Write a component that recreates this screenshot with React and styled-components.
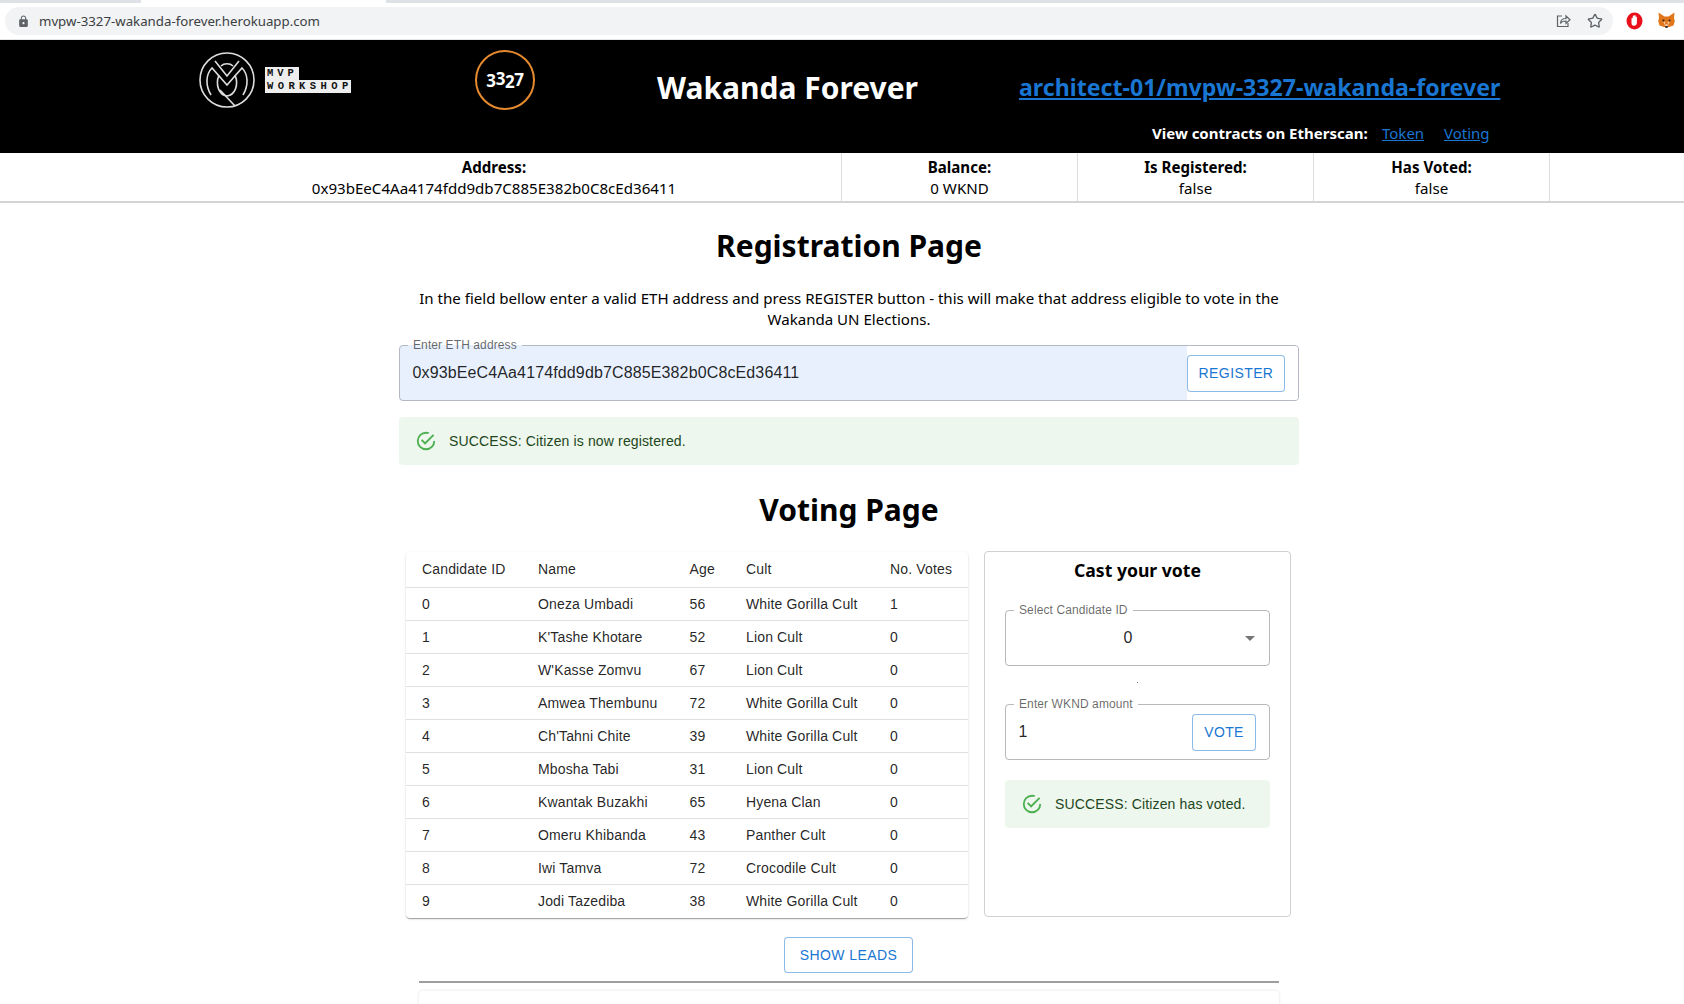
import React from "react";
import styled, { createGlobalStyle } from "styled-components";
import { MdLock } from "react-icons/md";
import { LuStar } from "react-icons/lu";

const GlobalStyle = createGlobalStyle`
  html, body {
    margin: 0;
    padding: 0;
    width: 1684px;
    height: 1004px;
    overflow: hidden;
    background: #fff;
  }
  * { box-sizing: border-box; }
`;

const Page = styled.div`
  width: 1684px;
  height: 1004px;
  overflow: hidden;
  font-family: "Noto Sans", "Open Sans", sans-serif;
  color: #000;
`;

/* browser chrome */
const TabStrip = styled.div`
  height: 3px;
  background: linear-gradient(to right, #dee1e6 141px, #fff 141px, #fff 386px, #dee1e6 386px);
`;

const Toolbar = styled.div`
  height: 37px;
  display: flex;
  align-items: flex-start;
  padding: 4px 0 0 5px;
  background: #fff;
  border-bottom: 1px solid #e4e5e7;
`;

const AddressBar = styled.div`
  width: 1608px;
  height: 28px;
  border-radius: 14px;
  background: #f1f3f4;
  display: flex;
  align-items: center;
  padding: 0 10px 0 12px;
`;

const UrlText = styled.span`
  margin-left: 9px;
  font-size: 13.25px;
  color: #3c4043;
  flex: 1;
`;

const ChromeIcon = styled.span`
  display: flex;
  color: #5f6368;
  margin-left: ${(p) => p.$gap || 0}px;
`;

const ExtIcon = styled.span`
  display: flex;
  margin: 5px 0 0 ${(p) => p.$gap}px;
`;

/* black header */
const Header = styled.header`
  height: 113px;
  background: #000;
  color: #fff;
  display: flex;
  padding-left: 199px;
`;

const LogoMark = styled.svg`
  width: 56px;
  height: 56px;
  margin-top: 12px;
`;

const Badge = styled.div`
  margin: 27px 0 0 10px;
  display: flex;
  flex-direction: column;
  align-items: flex-start;
  font-family: "Liberation Mono", monospace;
  font-weight: 700;
  font-size: 10.5px;
  line-height: 13px;
  color: #111;
`;

const BadgeLine = styled.span`
  background: #eee;
  height: 13px;
  letter-spacing: ${(p) => p.$spacing}px;
  padding-left: 2px;
  width: ${(p) => p.$width}px;
`;

const Circle = styled.div`
  width: 60px;
  height: 60px;
  margin: 10px 0 0 124px;
  border: 2px solid #e68a2e;
  border-radius: 50%;
  display: flex;
  align-items: center;
  justify-content: center;
  font-weight: 700;
  font-size: 17px;
  letter-spacing: -0.4px;
`;

const Digit = styled.span`
  position: relative;
  top: ${(p) => p.$shift}px;
`;

const Title = styled.h1`
  width: 261px;
  margin: 28px 0 0 122px;
  font-size: 30px;
  line-height: 40px;
  font-weight: 700;
  white-space: nowrap;
  text-align: center;
`;

const LinksColumn = styled.div`
  margin-left: 101px;
  display: flex;
  flex-direction: column;
`;

const RepoLink = styled.a`
  margin-top: 29px;
  font-size: 23.15px;
  line-height: 36px;
  font-weight: 700;
  color: #1976d2;
  text-decoration: underline;
  white-space: nowrap;
`;

const ContractsRow = styled.div`
  margin-top: 17px;
  padding-left: 133px;
  display: flex;
  font-size: 15px;
  line-height: 22px;
  white-space: nowrap;
`;

const ContractsLabel = styled.b`
  width: 230px;
`;

const ContractLink = styled.a`
  width: ${(p) => p.$width}px;
  color: #1976d2;
  text-decoration: underline;
`;

/* account info row */
const InfoRow = styled.div`
  display: grid;
  grid-template-columns: 695px 236px 236px 236px;
  height: 50px;
  padding-left: 147px;
  border-bottom: 2px solid #d4d4d4;
`;

const InfoCell = styled.div`
  border-right: 1px solid #ddd;
  text-align: center;
  font-size: 15.1px;
  line-height: 21px;
  padding-top: 4px;
`;

const InfoLabel = styled.div`
  font-weight: 700;
`;

/* main column */
const Main = styled.main`
  width: 900px;
  margin-left: 399px;
`;

const PageHeading = styled.h2`
  margin: ${(p) => p.$top}px 0 0;
  font-size: 30px;
  line-height: 40px;
  font-weight: 700;
  text-align: center;
`;

const Intro = styled.p`
  margin: 22px 20px 0;
  font-size: 15.07px;
  line-height: 20.5px;
  text-align: center;
`;

const Field = styled.fieldset`
  margin: ${(p) => p.$top}px 0 0;
  padding: 0;
  min-width: 0;
  height: 62px;
  border: 1px solid ${(p) => (p.$filled ? "#b4b8c4" : "rgba(0, 0, 0, 0.28)")};
  border-radius: 4px;
  background: ${(p) => (p.$filled ? "#e8f0fe" : "transparent")};
  font-family: "Liberation Sans", Arial, sans-serif;
`;

const Legend = styled.legend`
  margin-left: 8px;
  padding: 0 5px;
  font-size: 12px;
  line-height: 12px;
  letter-spacing: 0.1px;
  color: rgba(0, 0, 0, 0.6);
`;

const FieldRow = styled.div`
  display: flex;
  align-items: center;
  height: 54px;
  margin-top: -5px;
  padding-right: ${(p) => p.$end}px;
`;

const FieldValue = styled.div`
  flex: 1;
  padding-left: 12.5px;
  font-size: 16px;
  letter-spacing: 0.13px;
  color: rgba(0, 0, 0, 0.87);
`;

const OutlineButton = styled.button`
  height: ${(p) => p.$height || 37}px;
  width: ${(p) => p.$width}px;
  padding: 0;
  display: block;
  background: #fff;
  border: 1px solid rgba(25, 118, 210, 0.5);
  border-radius: 4px;
  color: #1976d2;
  font-family: "Liberation Sans", Arial, sans-serif;
  font-size: 14px;
  font-weight: 400;
  letter-spacing: 0.4px;
`;

const FilledEnd = styled.div`
  background: #fff;
  height: 54px;
  display: flex;
  align-items: center;
  padding: 0 13px 0 0;
  border-radius: 0 3px 3px 0;
`;

const Alert = styled.div`
  height: 48px;
  margin-top: ${(p) => p.$top}px;
  padding-left: 16px;
  display: flex;
  align-items: center;
  gap: 12px;
  border-radius: 4px;
  background: #edf7ed;
  color: #1e4620;
  font-family: "Liberation Sans", Arial, sans-serif;
  font-size: 14px;
  letter-spacing: 0.14px;
`;

/* voting area */
const VotingRow = styled.div`
  display: flex;
  align-items: flex-start;
  gap: 16px;
  margin-top: 22px;
  padding-left: 7px;
`;

const TableCard = styled.div`
  width: 562px;
  height: 366px;
  border-radius: 4px;
  background: #fff;
  box-shadow: 0 2px 1px -1px rgba(0, 0, 0, 0.2), 0 1px 1px rgba(0, 0, 0, 0.14), 0 1px 3px rgba(0, 0, 0, 0.12);
`;

const Table = styled.table`
  width: 562px;
  table-layout: fixed;
  border-collapse: collapse;
  font-family: "Liberation Sans", Arial, sans-serif;
  font-size: 14px;
  letter-spacing: 0.15px;
  color: rgba(0, 0, 0, 0.87);
`;

const HeadCell = styled.th`
  height: 35px;
  padding: 0 0 0 16px;
  width: ${(p) => p.$width}px;
  font-weight: 400;
  text-align: left;
  border-bottom: 1px solid #e0e0e0;
`;

const Cell = styled.td`
  height: 33px;
  padding: 0 0 0 16px;
  border-bottom: 1px solid #e0e0e0;
  white-space: nowrap;
`;

const LastRow = styled.tr`
  &:last-child td { border-bottom: none; }
`;

const VoteCard = styled.section`
  width: 307px;
  height: 366px;
  margin-top: -1px;
  padding: 6px 20px 0;
  border: 1px solid #d0d0d0;
  border-radius: 4px;
`;

const VoteTitle = styled.h3`
  margin: 0 0 22px;
  font-size: 17.6px;
  line-height: 24px;
  font-weight: 700;
  text-align: center;
`;

const SelectValue = styled.div`
  flex: 1;
  padding-left: 12px;
  text-align: center;
  font-size: 16px;
  color: rgba(0, 0, 0, 0.87);
`;

const SelectRow = styled.div`
  display: flex;
  align-items: center;
  height: 54px;
  margin-top: -5px;
  padding-right: 7px;
  color: rgba(0, 0, 0, 0.54);
`;

const Speck = styled.div`
  height: 32px;
  display: flex;
  align-items: center;
  justify-content: center;
  &::after {
    content: "";
    width: 1px;
    height: 1px;
    background: #777;
  }
`;

const LeadsWrap = styled.div`
  margin-top: 19px;
  padding-left: 385px;
`;

const Divider = styled.hr`
  width: 860px;
  height: 2px;
  margin: 8px 0 0 20px;
  border: none;
  background: #9e9e9e;
`;

const NextCard = styled.div`
  width: 860px;
  height: 40px;
  margin: 8px 0 0 20px;
  border-radius: 4px;
  box-shadow: 0 0 3px rgba(0, 0, 0, 0.14);
`;

const candidates = [
  ["Oneza Umbadi", 56, "White Gorilla Cult", 1],
  ["K'Tashe Khotare", 52, "Lion Cult", 0],
  ["W'Kasse Zomvu", 67, "Lion Cult", 0],
  ["Amwea Thembunu", 72, "White Gorilla Cult", 0],
  ["Ch'Tahni Chite", 39, "White Gorilla Cult", 0],
  ["Mbosha Tabi", 31, "Lion Cult", 0],
  ["Kwantak Buzakhi", 65, "Hyena Clan", 0],
  ["Omeru Khibanda", 43, "Panther Cult", 0],
  ["Iwi Tamva", 72, "Crocodile Cult", 0],
  ["Jodi Tazediba", 38, "White Gorilla Cult", 0],
];

const ADDRESS = "0x93bEeC4Aa4174fdd9db7C885E382b0C8cEd36411";

const SuccessIcon = () => (
  <svg width="22" height="22" viewBox="0 0 24 24" fill="#4caf50">
    <path d="M20,12A8,8 0 0,1 12,20A8,8 0 0,1 4,12A8,8 0 0,1 12,4C12.76,4 13.5,4.11 14.2,4.31L15.77,2.74C14.61,2.26 13.34,2 12,2A10,10 0 0,0 2,12A10,10 0 0,0 12,22A10,10 0 0,0 22,12M7.91,10.08L6.5,11.5L11,16L21,6L19.59,4.58L11,13.17L7.91,10.08Z" />
  </svg>
);

const ShareIcon = () => (
  <svg width="16" height="16" viewBox="0 0 16 16" fill="none" stroke="#5f6368" strokeWidth="1.2">
    <path d="M7 3H2.5v10.500h10.500V10" />
    <path d="M5.500 10.500c0-3.500 2.500-5 5.500-5V3l4 3.800-4 3.700V8c-2.500 0-4.500.6-5.500 2.500z" />
  </svg>
);

const OperaIcon = () => (
  <svg width="17" height="18" viewBox="0 0 17 18">
    <ellipse cx="8.500" cy="9" rx="8" ry="8.500" fill="#e8101a" />
    <path d="M5.500 6.500c0-1 1.200-1 1.300 0V4.200c0-1 1.400-1 1.400 0v-.5c0-1 1.400-1 1.400 0V5c.1-.9 1.300-.8 1.300.2v5.300c0 2-1.200 3.300-2.900 3.300-1.800 0-2.500-1.300-2.500-3z" fill="#fff" />
  </svg>
);

const FoxIcon = () => (
  <svg width="17" height="17" viewBox="0 0 17 17">
    <polygon points="0.500,0.500 6.500,4.500 10.500,4.500 16.500,0.500 16,6 16.800,9 15.500,13.500 11,15 6,15 1.500,13.500 0.200,9 1,6" fill="#e2761b" />
    <polygon points="5,9 7.500,10 6.500,13 8.500,12 10.500,13 9.500,10 12,9 10,14 7,14" fill="#f6c9a0" />
    <polygon points="7,14 10,14 9.500,16 7.500,16" fill="#3a2a20" />
    <circle cx="5.500" cy="8.500" r="1" fill="#2b1a10" />
    <circle cx="11.500" cy="8.500" r="1" fill="#2b1a10" />
  </svg>
);

const App = () => {
  return (
    <Page>
      <GlobalStyle />
      <TabStrip />
      <Toolbar>
        <AddressBar>
          <ChromeIcon>
            <MdLock size={13} />
          </ChromeIcon>
          <UrlText>mvpw-3327-wakanda-forever.herokuapp.com</UrlText>
          <ChromeIcon>
            <ShareIcon />
          </ChromeIcon>
          <ChromeIcon $gap={16}>
            <LuStar size={16} />
          </ChromeIcon>
        </AddressBar>
        <ExtIcon $gap={13}>
          <OperaIcon />
        </ExtIcon>
        <ExtIcon $gap={15}>
          <FoxIcon />
        </ExtIcon>
      </Toolbar>

      <Header>
        <LogoMark viewBox="0 0 56 56" fill="none" stroke="#ddd" strokeWidth="1.6">
          <circle cx="28" cy="28" r="27" />
          <path d="M12 43C6 33 7 22 13 16L28 33L43 16C49 22 50 33 44 43" />
          <path d="M16 9L28 24L40 9" />
          <path d="M20 23C16 33 20 43 28 44C36 43 40 33 36 23" />
          <path d="M22 14C25 11 31 11 34 14" />
          <path d="M21 38L36 54" />
        </LogoMark>
        <Badge>
          <BadgeLine $spacing={4} $width={34}>MVP</BadgeLine>
          <BadgeLine $spacing={4.4} $width={86}>WORKSHOP</BadgeLine>
        </Badge>
        <Circle>
          <Digit $shift={0}>3</Digit>
          <Digit $shift={-2}>3</Digit>
          <Digit $shift={1}>2</Digit>
          <Digit $shift={-1}>7</Digit>
        </Circle>
        <Title>Wakanda Forever</Title>
        <LinksColumn>
          <RepoLink href="#">architect-01/mvpw-3327-wakanda-forever</RepoLink>
          <ContractsRow>
            <ContractsLabel>View contracts on Etherscan:</ContractsLabel>
            <ContractLink $width={62} href="#">Token</ContractLink>
            <ContractLink $width={47} href="#">Voting</ContractLink>
          </ContractsRow>
        </LinksColumn>
      </Header>

      <InfoRow>
        <InfoCell>
          <InfoLabel>Address:</InfoLabel>
          {ADDRESS}
        </InfoCell>
        <InfoCell>
          <InfoLabel>Balance:</InfoLabel>0 WKND
        </InfoCell>
        <InfoCell>
          <InfoLabel>Is Registered:</InfoLabel>false
        </InfoCell>
        <InfoCell>
          <InfoLabel>Has Voted:</InfoLabel>false
        </InfoCell>
      </InfoRow>

      <Main>
        <PageHeading $top={23}>Registration Page</PageHeading>
        <Intro>
          In the field bellow enter a valid ETH address and press REGISTER button - this will make that address
          eligible to vote in the Wakanda UN Elections.
        </Intro>
        <Field $top={10} $filled>
          <Legend>Enter ETH address</Legend>
          <FieldRow $end={0}>
            <FieldValue>{ADDRESS}</FieldValue>
            <FilledEnd>
              <OutlineButton $width={98}>REGISTER</OutlineButton>
            </FilledEnd>
          </FieldRow>
        </Field>
        <Alert $top={16}>
          <SuccessIcon />
          SUCCESS: Citizen is now registered.
        </Alert>

        <PageHeading $top={25}>Voting Page</PageHeading>
        <VotingRow>
          <TableCard>
            <Table>
              <thead>
                <tr>
                  <HeadCell $width={116}>Candidate ID</HeadCell>
                  <HeadCell $width={151.5}>Name</HeadCell>
                  <HeadCell $width={56.5}>Age</HeadCell>
                  <HeadCell $width={144}>Cult</HeadCell>
                  <HeadCell $width={94}>No. Votes</HeadCell>
                </tr>
              </thead>
              <tbody>
                {candidates.map(([name, age, cult, votes], id) => (
                  <LastRow key={id}>
                    <Cell>{id}</Cell>
                    <Cell>{name}</Cell>
                    <Cell>{age}</Cell>
                    <Cell>{cult}</Cell>
                    <Cell>{votes}</Cell>
                  </LastRow>
                ))}
              </tbody>
            </Table>
          </TableCard>
          <VoteCard>
            <VoteTitle>Cast your vote</VoteTitle>
            <Field $top={0}>
              <Legend>Select Candidate ID</Legend>
              <SelectRow>
                <SelectValue>0</SelectValue>
                <svg width="24" height="24" viewBox="0 0 24 24" fill="currentColor">
                  <path d="M7 10l5 5 5-5z" />
                </svg>
              </SelectRow>
            </Field>
            <Speck />
            <Field $top={0}>
              <Legend>Enter WKND amount</Legend>
              <FieldRow $end={13}>
                <FieldValue>1</FieldValue>
                <OutlineButton $width={64}>VOTE</OutlineButton>
              </FieldRow>
            </Field>
            <Alert $top={20}>
              <SuccessIcon />
              SUCCESS: Citizen has voted.
            </Alert>
          </VoteCard>
        </VotingRow>

        <LeadsWrap>
          <OutlineButton $width={129} $height={36}>SHOW LEADS</OutlineButton>
        </LeadsWrap>
        <Divider />
        <NextCard />
      </Main>
    </Page>
  );
};

export default App;
